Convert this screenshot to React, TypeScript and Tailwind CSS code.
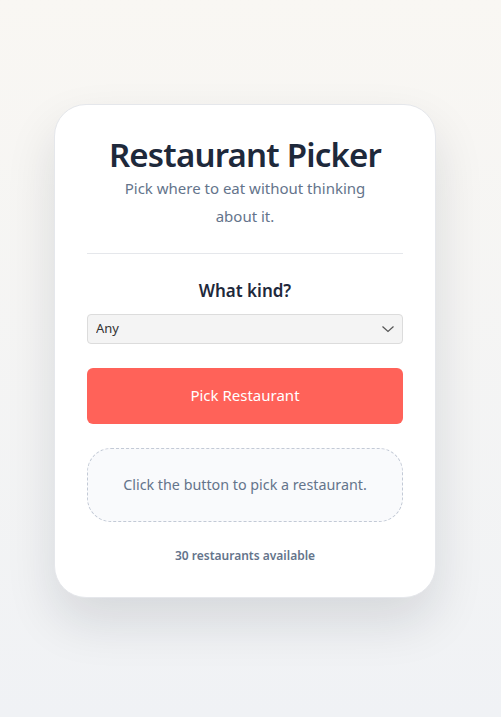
import React, { useState } from 'react';

const RESTAURANTS = [
  { name: 'Pasta Palace', kind: 'Italian' },
  { name: 'Sushi Go', kind: 'Japanese' },
  { name: 'Taco Town', kind: 'Mexican' },
];

const App: React.FC = () => {
  const [kind, setKind] = useState('Any');
  const [pick, setPick] = useState<string | null>(null);

  const handlePick = () => {
    const list = kind === 'Any' ? RESTAURANTS : RESTAURANTS.filter(r => r.kind === kind);
    if (list.length === 0) return;
    setPick(list[Math.floor(Math.random() * list.length)].name);
  };

  return (
    <div
      className="min-h-screen flex items-center justify-center pb-4 pr-[11px] bg-gradient-to-b from-[#f9f7f3] to-[#f0f2f5]"
      style={{ fontFamily: '"Noto Sans", "Open Sans", sans-serif' }}
    >
      <div className="w-[382px] bg-white rounded-[32px] border border-[#e5e7eb] shadow-[0_24px_50px_rgba(15,23,42,0.12)] px-8 pt-[31px] pb-[33px] flex flex-col">
        <h1 className="text-center text-[33px] leading-[38px] font-semibold tracking-[-0.8px] text-[#1e293b]">
          Restaurant Picker
        </h1>
        <p className="mx-auto max-w-[260px] text-center text-[15px] leading-[28px] text-[#64748b]">
          Pick where to eat without thinking about it.
        </p>
        <div className="mt-[23px] h-px bg-[#e5e7eb]" />

        <h2 className="mt-[24px] text-center text-[17px] leading-[26px] font-semibold text-[#1e293b]">
          What kind?
        </h2>
        <div className="relative mt-[10px]">
          <select
            value={kind}
            onChange={e => setKind(e.target.value)}
            className="w-full h-[30px] appearance-none rounded-[4px] border border-[#dcdcdc] bg-[#f4f4f4] pl-2 pr-8 text-[13px] text-[#333]"
          >
            <option>Any</option>
            <option>Italian</option>
            <option>Japanese</option>
            <option>Mexican</option>
          </select>
          <svg
            className="pointer-events-none absolute right-[8px] top-[9px] h-[12px] w-[14px] text-[#555]"
            viewBox="0 0 14 12"
            fill="none"
            stroke="currentColor"
            strokeWidth={1.2}
          >
            <path d="M1.5 3.5 L7 8.5 L12.5 3.5" />
          </svg>
        </div>

        <button
          onClick={handlePick}
          className="mt-6 h-[56px] w-full rounded-[6px] bg-[#ff6259] text-white text-[15px]"
        >
          Pick Restaurant
        </button>

        <div className="mt-6 h-[74px] rounded-[24px] border border-dashed border-[#c3cad6] bg-[#f9fafc] flex items-center justify-center">
          <p className="text-[14.3px] text-[#64748b]">
            {pick ?? 'Click the button to pick a restaurant.'}
          </p>
        </div>

        <p className="mt-[26px] text-center text-[12px] leading-4 font-semibold text-[#64748b]">
          30 restaurants available
        </p>
      </div>
    </div>
  );
};

export default App;
